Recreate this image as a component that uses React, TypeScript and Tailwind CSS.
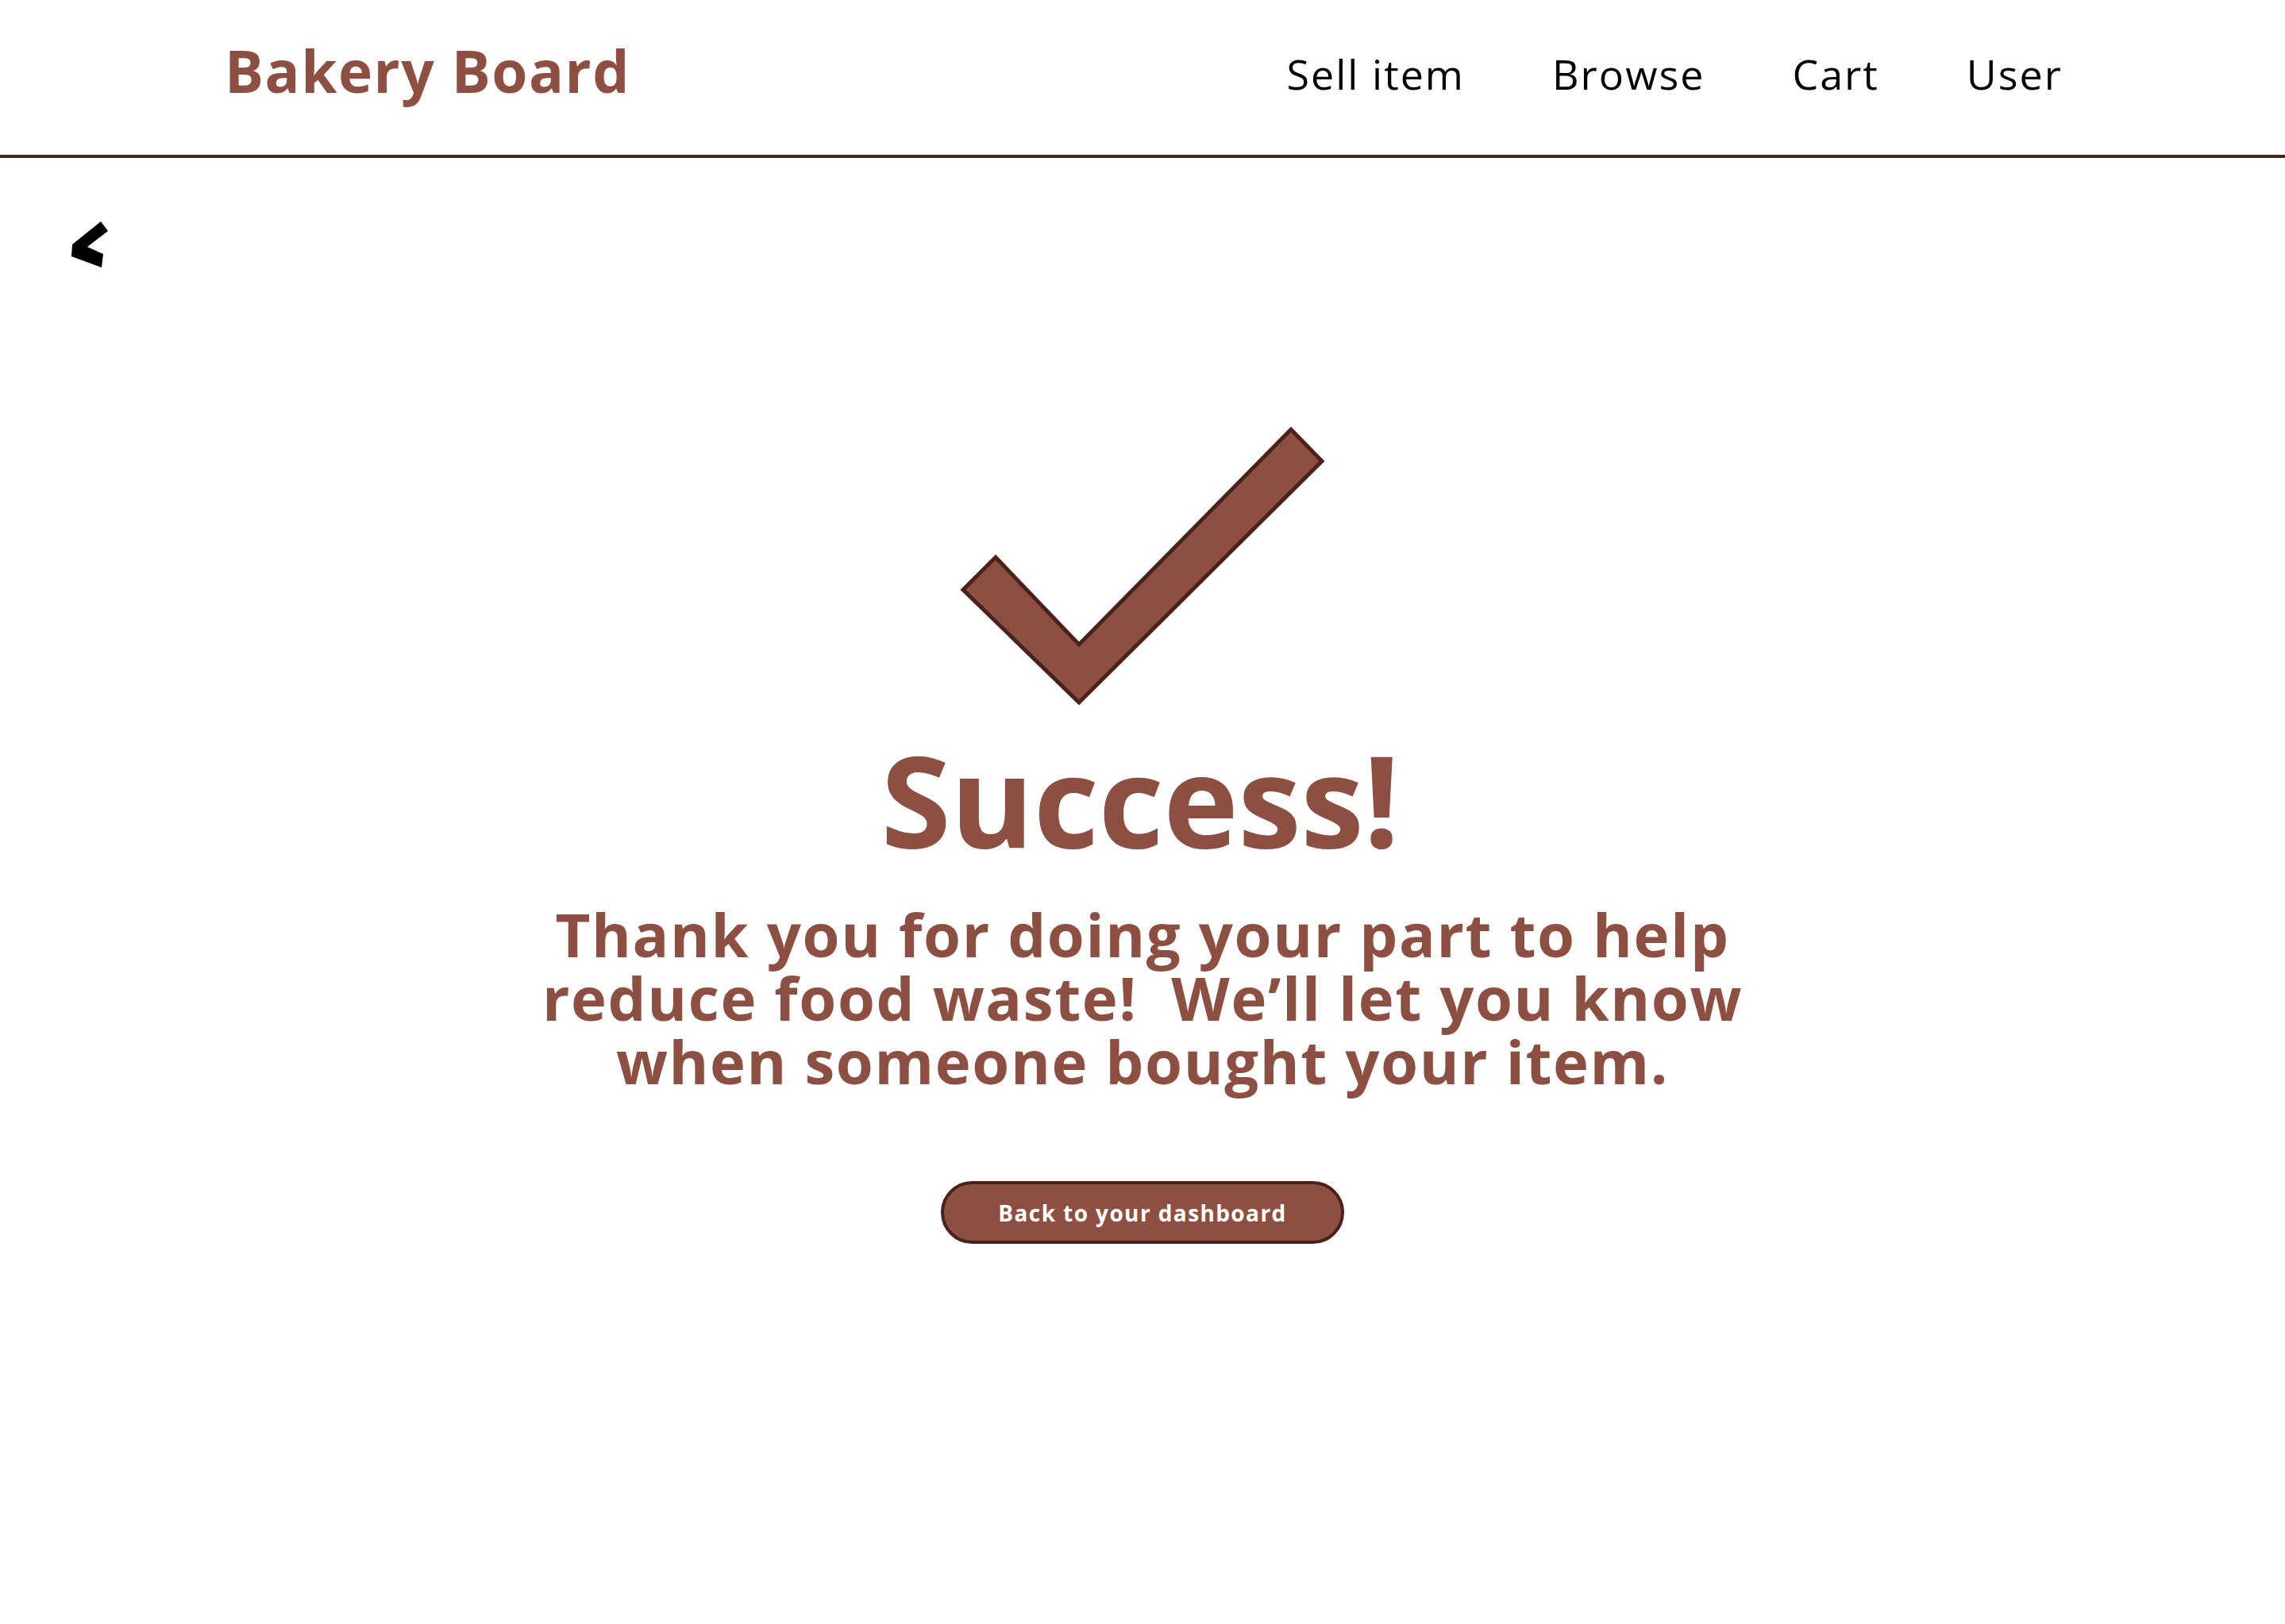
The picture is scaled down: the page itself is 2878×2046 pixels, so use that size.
import React from "react";

export default function App() {
  return (
    <div className="min-h-screen w-full bg-white" style={{ fontFamily: '"Open Sans", "Noto Sans", sans-serif' }}>
      <header className="flex h-[199px] items-start justify-between border-b-4 border-[#4b211c] pl-[283px] pr-[280px]">
        <div className="mt-[52px] text-[73px] font-bold leading-none tracking-[1.5px] text-[#8e4f43]">Bakery Board</div>
        <nav className="mt-[67px] flex gap-[110px] text-[52px] leading-none tracking-[2px] text-black">
          <a className="cursor-pointer">Sell item</a>
          <a className="cursor-pointer">Browse</a>
          <a className="cursor-pointer">Cart</a>
          <a className="cursor-pointer">User</a>
        </nav>
      </header>
      <main className="flex flex-col">
        <div className="pl-[85px] pt-[76px]">
          <svg width="55" height="65" viewBox="0 0 55 65">
            <polygon points="42,4 51,16 25,36 45,45 43,62 5,48 6,33" fill="#000" />
          </svg>
        </div>
        <div className="flex flex-col items-center">
          <svg width="466" height="356" viewBox="0 0 466 356" className="mt-[195px]">
            <polygon
              points="7,208 48,167 153,277 420,6 459,46 153,350"
              fill="#8e4f43"
              stroke="#4b211c"
              strokeWidth="5"
            />
          </svg>
          <h1 className="mt-[35px] pr-[6px] text-[160px] font-bold leading-none tracking-[-0.5px] text-[#8e4f43]">Success!</h1>
          <div className="mt-[51px] flex flex-col items-center text-[76px] font-bold leading-[80px] tracking-[1.6px] text-[#8e4f43]">
            <span className="block">Thank you for doing your part to help</span>
            <span className="block">reduce food waste!&nbsp; We’ll let you know</span>
            <span className="block">when someone bought your item.</span>
          </div>
          <button className="mt-[111px] flex h-[79px] w-[508px] items-center justify-center rounded-full border-4 border-[#4b211c] bg-[#8e4f43] text-[28px] font-bold tracking-[1.4px] text-white">
            Back to your dashboard
          </button>
        </div>
      </main>
    </div>
  );
}
